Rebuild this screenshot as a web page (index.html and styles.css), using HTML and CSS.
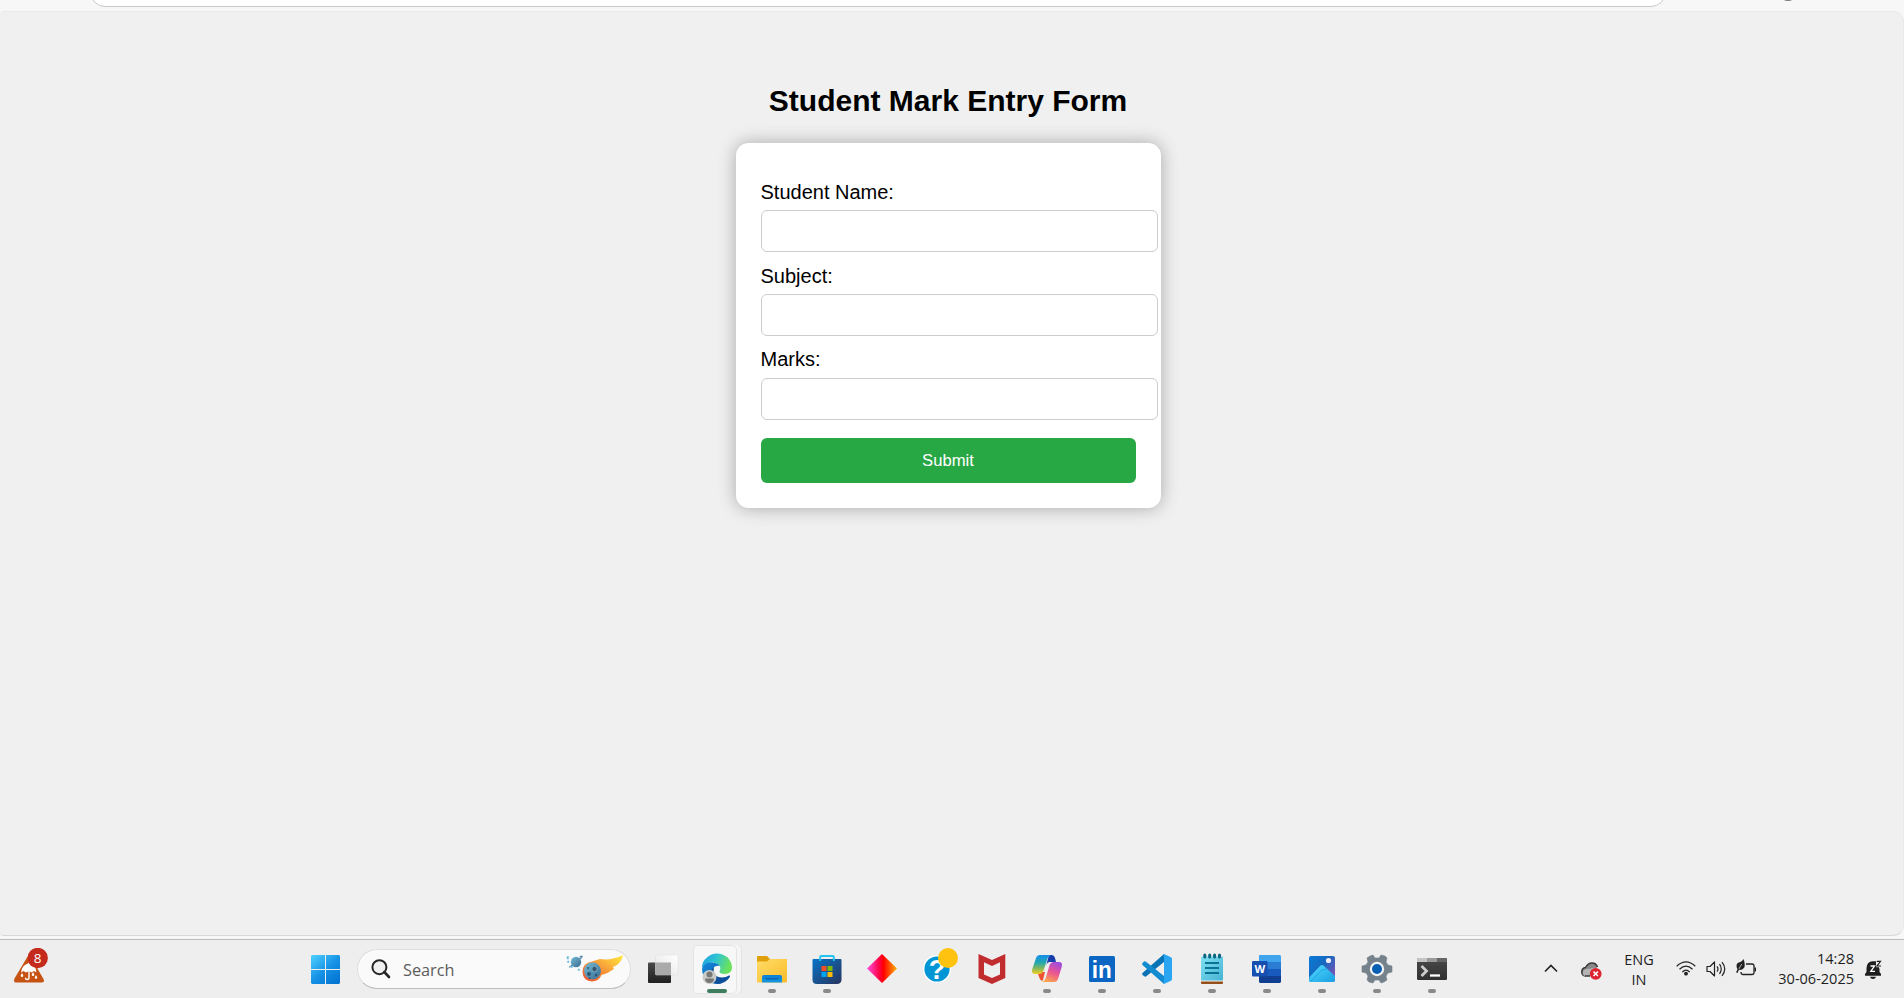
FILE: index.html
```html
<!DOCTYPE html>
<html lang="en">
<head>
<meta charset="utf-8">
<title>Student Mark Entry Form</title>
<link rel="stylesheet" href="styles.css">
</head>
<body>
<header class="browser-bar">
  <div class="address"><span class="address-chip"></span></div>
  <span class="toolbar-dot"></span>
</header>
<main class="viewport">
  <h1 class="title">Student Mark Entry Form</h1>
  <form class="card">
    <label class="label" for="name">Student Name:</label>
    <input class="field" id="name" type="text">
    <label class="label" for="subject">Subject:</label>
    <input class="field" id="subject" type="text">
    <label class="label label-marks" for="marks">Marks:</label>
    <input class="field" id="marks" type="text">
    <button class="submit" type="button">Submit</button>
  </form>
</main>
<footer class="taskbar">
  <div class="widget">
    <svg width="36" height="38" viewBox="0 0 36 38">
      <path d="M15 9.5 2.500 30.5Q1 34.5 4 34.5H29.500Q33 34.500 31.500 31L19 9.500Q17 7 15 9.500Z" fill="#c65314"/>
      <path d="M9 24.500Q10 17 16 15.500L16.500 14 17 15.500Q24 17 24.500 24.500L22 23 19.500 24.500 17 23 14 24.500 11.500 23Z" fill="#fff"/>
      <path d="M17 23v6.500q0 2-1.800 2t-1.700-1.800" fill="none" stroke="#fff" stroke-width="1.400"/>
      <path d="M10 25l1.300 2.500q0 1.500-1.300 1.500t-1.300-1.500ZM21 24l1.300 2.500q0 1.500-1.300 1.500t-1.300-1.500ZM24 27l1.300 2.500q0 1.300-1.300 1.300t-1.300-1.300Z" fill="#fff"/>
      <circle cx="25.700" cy="10" r="10.200" fill="#c42b1c"/>
      <text x="25.700" y="14.800" class="badge-text">8</text>
    </svg>
  </div>
  <svg class="start" width="29" height="29" viewBox="0 0 29 29">
    <defs><linearGradient id="win" gradientUnits="userSpaceOnUse" x1="0" y1="0" x2="25" y2="29"><stop stop-color="#4fd2ff"/><stop offset=".55" stop-color="#1591e5"/><stop offset="1" stop-color="#0474d2"/></linearGradient></defs>
    <path d="M1 0H14V14H0V1ZM15 0H28L29 1V14H15ZM0 15H14V29H1L0 28ZM15 15H29V28L28 29H15Z" fill="url(#win)"/>
  </svg>
  <div class="search">
    <svg class="magnifier" width="20" height="20" viewBox="0 0 20 20"><circle cx="8.400" cy="8.200" r="7" fill="#f0f0f0" stroke="#262626" stroke-width="2"/><path d="m13.300 13 4.700 5" stroke="#262626" stroke-width="2.600" stroke-linecap="round"/></svg>
    <span class="search-text">Search</span>
    <svg class="comet" width="58" height="28" viewBox="0 0 58 28">
      <defs><linearGradient id="fire" x1="0" x2="1" y1="1" y2="0"><stop stop-color="#ee512f"/><stop offset=".45" stop-color="#f79339"/><stop offset="1" stop-color="#ffec3c"/></linearGradient>
      <linearGradient id="planet" x2="1" y2="1"><stop stop-color="#75bed8"/><stop offset="1" stop-color="#376a91"/></linearGradient></defs>
      <circle cx="11" cy="7" r="5.200" fill="url(#planet)"/>
      <path d="M6 11Q3 13 6 11L16 3Q19 0 14.500 2" fill="none" stroke="#5e91ad" stroke-width="1.300"/>
      <path d="M2 1.500h1.500V4H2zM2.500 6h1.500v1.500H2.500zM6 11h1.500v1.500H6zM13 14h1.500v1.500H13z" fill="#72bddb" stroke="#72bddb" stroke-width=".5"/>
      <path d="M17.500 17Q17.500 8 27 6.500L35 4Q43 5 48 3.500Q53 3 58 0Q57 6 52 10L48 12 49 14Q44 18 36.500 20Q34 26.500 27 26.500Q18 26 17.500 17Z" fill="url(#fire)"/>
      <circle cx="27.500" cy="16" r="8.400" fill="url(#planet)"/>
      <circle cx="29.500" cy="14" r="2.700" fill="#33536f" stroke="#79aac0"/><circle cx="24" cy="19" r="2" fill="#33536f"/><circle cx="24.500" cy="23" r="1" fill="#33536f"/><circle cx="31" cy="20" r="1.200" fill="#33536f"/><circle cx="23" cy="13" r="1" fill="#33536f"/>
    </svg>
  </div>
  <nav class="apps">
    <div class="app app-taskview">
      <svg class="icon" viewBox="0 0 30 30"><defs><linearGradient id="tv" x2="0" y2="1"><stop stop-color="#494949"/><stop offset="1" stop-color="#202020"/></linearGradient><linearGradient id="tw" x1="1" x2="0" y2="1"><stop stop-color="#fff"/><stop offset="1" stop-color="#e3e3e3"/></linearGradient></defs>
      <rect y="8.500" width="23" height="20.500" rx="1" fill="url(#tv)"/><rect x="7.500" y="1" width="22.500" height="20" rx="1" fill="url(#tw)" stroke="#ddd" stroke-width=".5"/><path d="M7.500 8.500H23V21H8.500l-1-1z" fill="#aaa"/></svg>
    </div>
    <div class="app app-active">
      <svg class="icon" viewBox="0 0 30 30"><defs><linearGradient id="e1" x2="1" y2=".3"><stop stop-color="#1b9de2"/><stop offset=".5" stop-color="#30c5d3"/><stop offset="1" stop-color="#6be25b"/></linearGradient><linearGradient id="e2" x2="1" y2="1"><stop stop-color="#168bdc"/><stop offset="1" stop-color="#0857ad"/></linearGradient></defs>
      <path d="M0 14Q0 7 5 3.500A15 15 0 0 1 30 13Q30 20 23 20Q17 20 17.500 17Q19 15 18 12Q13 7 7 9Q2 10 0 14Z" fill="url(#e1)"/>
      <path d="M0 15Q1 9 8 8.500Q15 8 18 12Q12 11 10.500 16Q9 25 20 29A15 15 0 0 1 0 15Z" fill="url(#e2)"/>
      <path d="M12 13Q10 23 20 23.500Q24 23.500 27 21.500Q29 21 27.500 23.500A15 15 0 0 1 15 30Q8 28 9 18Q10 14 12 13Z" fill="#0d4f9b"/>
      <circle cx="7.500" cy="23" r="7" fill="#c9c9c7"/><circle cx="7.500" cy="20.500" r="3" fill="#777"/><path d="M3 25.500Q3 24.500 4 24.500H11Q12 24.500 12 25.500Q11 29 7.500 29T3 25.500Z" fill="#777"/></svg>
      <i class="dot dot-active"></i>
    </div>
    <div class="app">
      <svg class="icon" viewBox="0 0 30 30"><defs><linearGradient id="fo" x2="1" y2="1"><stop stop-color="#ffdc69"/><stop offset="1" stop-color="#f9bd29"/></linearGradient><linearGradient id="fb" x2="0" y2="1"><stop stop-color="#0d7dd3"/><stop offset="1" stop-color="#1599e4"/></linearGradient></defs>
      <path d="M0 3Q0 2 1 2H10L13 5H29Q30 5 30 6V12H0Z" fill="#dfa00b"/><path d="M0 8.500Q0 7.500 1 7.500H10L13 5H29Q30 5 30 6V27.500Q30 28.500 29 28.500H1Q0 28.500 0 27.500Z" fill="url(#fo)"/><path d="M5 28.500V23Q5 21 7 21H23Q25 21 25 23V28.500Z" fill="url(#fb)"/><path d="M8.500 24.800H21.500" stroke="#06569f" stroke-width="1.100"/></svg>
      <i class="dot"></i>
    </div>
    <div class="app">
      <svg class="icon" viewBox="0 0 30 30"><defs><linearGradient id="st" x2="1" y2="1"><stop stop-color="#0873c7"/><stop offset="1" stop-color="#28345e"/></linearGradient></defs>
      <path d="M.500 6Q.500 5 1.500 5H28.500Q29.500 5 29.500 6V26Q29 30 25 30H5Q.500 30 .500 26Z" fill="url(#st)"/><path d="M8.200 7V3Q8.200 2 9.200 2H20.800Q21.800 2 21.800 3V7" fill="none" stroke="#22c3f1" stroke-width="2"/><path d="M9.500 12h5v5h-5z" fill="#f25022"/><path d="M15.500 12h5v5h-5z" fill="#7fba00"/><path d="M9.500 18h5v5h-5z" fill="#00a4ef"/><path d="M15.500 18h5v5h-5z" fill="#ffb900"/></svg>
      <i class="dot"></i>
    </div>
    <div class="app">
      <svg class="icon" viewBox="0 0 30 30"><defs><linearGradient id="di"><stop stop-color="#ff4fe0"/><stop offset=".43" stop-color="#ff003c"/><stop offset=".55" stop-color="#ff0000"/><stop offset="1" stop-color="#ffb400"/></linearGradient></defs><path d="M15 0 30 14.500 15 29 0 14.500Z" fill="url(#di)"/></svg>
    </div>
    <div class="app">
      <svg class="icon" viewBox="0 0 30 30"><circle cx="15" cy="15" r="13.300" fill="#0096d6" stroke="#fff" stroke-width="1.400"/><text x="15" y="25" class="help-text">?</text><circle cx="26" cy="4" r="10" fill="#ffc20e"/></svg>
    </div>
    <div class="app">
      <svg class="icon" viewBox="0 0 30 30"><path fill-rule="evenodd" d="M1.500 0 15 6 28.300 0V24L15 30 1.500 24ZM7 8.200V20.500L15 24 23 20.500V8.200L15 12Z" fill="#c12c2f"/></svg>
    </div>
    <div class="app">
      <svg class="icon" viewBox="0 0 30 30"><defs><linearGradient id="c1" x2="0" y2="1"><stop stop-color="#168fea"/><stop offset=".4" stop-color="#21a8b0"/><stop offset=".7" stop-color="#83b75a"/><stop offset="1" stop-color="#f3cf25"/></linearGradient><linearGradient id="c2" x1=".7" x2=".3" y2="1"><stop stop-color="#a04be0"/><stop offset=".5" stop-color="#eb5591"/><stop offset="1" stop-color="#fba64d"/></linearGradient></defs>
      <path d="M17 1H19.500Q22 1 23 4L24 8H18Q15 8 14 12Z" fill="#173dac"/><path d="M7 18H13L11 26Q9 28 7.500 24L6 20Z" fill="#ef5133"/>
      <path d="M8 1H19Q16 2 15 6L12 15Q11 20 7 20H3Q-1 20 .300 15L4 4Q5 1 8 1Z" fill="url(#c1)"/>
      <path d="M22 28H10Q13 27 14 23L17 13Q18 8 22 8H27Q31 8 29.700 13L26 25Q25 28 22 28Z" fill="url(#c2)"/></svg>
      <i class="dot"></i>
    </div>
    <div class="app">
      <svg class="icon" viewBox="0 0 30 30"><rect x="2" y="2" width="26" height="26" rx="1.500" fill="#0a66c2"/><text x="4.800" y="24" textLength="20" lengthAdjust="spacingAndGlyphs" class="in-text">in</text></svg>
      <i class="dot"></i>
    </div>
    <div class="app">
      <svg class="icon" viewBox="0 0 30 30"><path d="M.500 19 22 0V8L4 22.500Q3 23 2 22L.500 21Q-.200 20 .500 19Z" fill="#0873b5"/><path d="M.500 11Q-.200 10 .500 9L2 7.500Q3 7 4 7.700L22 22V30L.500 11Z" fill="#138bd1"/><path d="M22 0 28.500 3Q30 3.500 30 5V25Q30 26.500 28.500 27L22 30Q20.500 29 22 27V3Q21 1 22 0Z" fill="#29a5f2"/></svg>
      <i class="dot"></i>
    </div>
    <div class="app">
      <svg class="icon" viewBox="0 0 30 30"><defs><linearGradient id="no" x2="1" y2="1"><stop stop-color="#82e1f2"/><stop offset="1" stop-color="#44b2d4"/></linearGradient></defs><rect x="4" y="25" width="22" height="5" rx="1" fill="#954f18"/><path d="M4 25h22v2.500H4z" fill="#f5f5f5"/><rect x="4" y="2.500" width="22" height="24" rx="1" fill="url(#no)"/><path d="M8 9h14M8 14h14M8 19h14" stroke="#087395" stroke-width="1.800"/><path d="M7.800 1v2M12.700 1v2M17.600 1v2M22.500 1v2" stroke="#096680" stroke-width="3" stroke-linecap="round"/></svg>
      <i class="dot"></i>
    </div>
    <div class="app">
      <svg class="icon" viewBox="0 0 30 30"><path d="M7 1H28L29 2V8H7Z" fill="#41a5ee"/><path d="M7 8h22v7H7z" fill="#2b7cd3"/><path d="M7 15h22v7H7z" fill="#185abd"/><path d="M7 22H29V28L28 29H8L7 28Z" fill="#103f91"/><rect y="7" width="15.500" height="15.500" rx="1" fill="#174fb1"/><text x="7.700" y="18.800" class="word-text">W</text></svg>
      <i class="dot"></i>
    </div>
    <div class="app">
      <svg class="icon" viewBox="0 0 30 30"><defs><linearGradient id="ph" x2="1" y2=".8"><stop stop-color="#087bd7"/><stop offset=".5" stop-color="#1768bf"/><stop offset="1" stop-color="#8851b3"/></linearGradient><linearGradient id="pm" x2="1" y2="1"><stop stop-color="#53dcff"/><stop offset="1" stop-color="#189de1"/></linearGradient></defs><rect x="2" y="2" width="26" height="26" rx="2" fill="url(#ph)"/><path d="M2.500 23 13 12Q15 10 17 12L28 22V26Q28 28 26 28H4Q2 28 2 26Z" fill="url(#pm)"/><path d="M4 27 15 16 20 15" fill="none" stroke="#1ba9e5" stroke-width="1"/><circle cx="21.500" cy="6.500" r="2.600" fill="#f1edf6"/></svg>
      <i class="dot"></i>
    </div>
    <div class="app">
      <svg class="icon" viewBox="0 0 30 30"><path d="M8 2 11 1 13 4H17L19 1 23 2 25 4 24 8 26 11 30 12V18L26 19 24 22 25 26 22 28 19 29 17 26H13L11 29 7 28 5 26 6 22 4 19 0 18V12L4 11 6 8 5 4Z" fill="#75818b" stroke="#75818b" stroke-width=".6" stroke-linejoin="round"/><circle cx="15" cy="15" r="7.200" fill="#f4f4f4"/><circle cx="15" cy="15" r="5" fill="#0860b5"/></svg>
      <i class="dot"></i>
    </div>
    <div class="app">
      <svg class="icon" viewBox="0 0 30 30"><defs><linearGradient id="te" x2="0" y2="1"><stop stop-color="#4a4a4a"/><stop offset="1" stop-color="#303030"/></linearGradient></defs><rect y="4" width="30" height="22" rx="1.200" fill="url(#te)"/><path d="M0 8V5Q0 4 1 4H10V8Z" fill="#c4c4c4"/><path d="M10 4h10v4H10z" fill="#999"/><path d="M20 4h9q1 0 1 1v3H20z" fill="#666"/><path d="m4.500 12 5 5-5 5" fill="none" stroke="#ccc" stroke-width="2.800"/><path d="M13 21.500H23" stroke="#fff" stroke-width="2.300"/></svg>
      <i class="dot"></i>
    </div>
  </nav>
  <div class="tray">
    <svg class="chevron" width="14" height="9" viewBox="0 0 14 9"><path d="m1 7.500 6-6 6 6" fill="none" stroke="#222" stroke-width="1.600"/></svg>
    <svg class="cloud" width="21" height="18" viewBox="0 0 21 18"><path d="M4.500 14Q.700 13.500.800 9.500Q1 6 4.500 5.500Q7 1 11 1Q15 1 16.500 5" fill="#888" stroke="#383838" stroke-width="1.500"/><path d="M2 10Q4 6 9 7Q12 5 15 6L10 14H4Q1 13 2 10Z" fill="#b4b4b4"/><path d="M4 14h5" stroke="#383838" stroke-width="1.500"/><circle cx="14.700" cy="11.800" r="5.900" fill="#de252f"/><path d="m12.500 9.600 4.400 4.400m0-4.400-4.400 4.400" stroke="#fff" stroke-width="1.500"/></svg>
    <div class="language"><span>ENG</span><span>IN</span></div>
    <svg class="wifi" width="20" height="15" viewBox="0 0 20 15"><g fill="none" stroke="#222" stroke-width="1.200"><path d="M.700 5.300Q10-3.500 19.300 5.300"/><path d="M3.500 8.300Q10 2 16.500 8.300"/><path d="M6.300 11.200Q10 7 13.700 11.200"/></g><circle cx="10" cy="12.700" r="1.900" fill="#222"/></svg>
    <svg class="speaker" width="20" height="16" viewBox="0 0 20 16"><g fill="none" stroke="#222" stroke-width="1.200" stroke-linejoin="round"><path d="M1 5.500H4L8.500 1V15L4 10.500H1Z"/><path d="M11 5.300Q13 8 11 10.700M13.500 3.200Q17 8 13.500 12.800M16 1.200Q21.500 8 16 14.800"/></g></svg>
    <svg class="battery" width="21" height="18" viewBox="0 0 21 18"><path d="M10 5H16Q18 5 18 7V13.500Q18 15.500 16 15.500H7Q5 15.500 5 13" fill="none" stroke="#222" stroke-width="1.300"/><path d="M18.500 8.500h1.500v4h-1.500z" fill="#222"/><path d="M7.500 0Q9.500 5 8.300 8.500Q6.500 11.500 3 10.800L1.500 14 0 13.300 1.500 10.500Q-1.500 4 4.500 3Q6.500 2 7.500 0Z" fill="#222"/><path d="m2.800 10 3-5" stroke="#ededed" stroke-width=".7"/></svg>
    <div class="clock"><span>14:28</span><span>30-06-2025</span></div>
    <svg class="bell" width="18" height="20" viewBox="0 0 18 20"><path d="M1.500 12V8Q2 1.500 7.500 1.300H12L14.500 9V12L16 14V15.700H0V14ZM5 16.800H11Q10.500 19 8 19T5 16.800Z" fill="#1e1e1e"/><path d="M11 0H18V7.200H11Z" fill="#ededed"/><path d="M5.500 6H9.500L5.800 11.300H10" fill="none" stroke="#fff" stroke-width="1.300"/><path d="M11.700 1.300H15.500L12 6H16" fill="none" stroke="#1e1e1e" stroke-width="1.200"/></svg>
  </div>
</footer>
</body>
</html>
```

FILE: styles.css
```css
* { box-sizing: border-box; }
body {
  margin: 0;
  width: 1904px;
  height: 998px;
  display: flex;
  flex-direction: column;
  overflow: hidden;
  background: #f7f7f7;
  font-family: "Liberation Sans", Arial, sans-serif;
}
.browser-bar {
  height: 11px;
  flex: none;
  display: flex;
  align-items: flex-start;
  padding-left: 90px;
  overflow: hidden;
}
.address {
  width: 1576px;
  height: 30px;
  margin-top: -23px;
  border: 1px solid #c8c8c8;
  border-radius: 16px;
  background: #fff;
  padding: 0 0 6px 8px;
  display: flex;
}
.address-chip { width: 50px; background: #f5f5f5; border-radius: 10px; }
.toolbar-dot { width: 18px; height: 18px; margin: -17px 0 0 113px; border-radius: 50%; background: #777; }
.viewport {
  height: 925px;
  flex: none;
  display: flex;
  flex-direction: column;
  align-items: center;
  padding: 72px 7px 0 0;
  background: #f0f0f0;
  border: 1px solid #e9e9e9;
  border-left: 0;
  border-bottom-color: #d9d9d9;
  border-radius: 4px 11px 11px 4px;
}
.title { margin: 0; font-size: 30px; line-height: 34px; font-weight: 700; color: #000; }
.card {
  width: 425px;
  height: 365px;
  margin-top: 25px;
  padding: 37px 25px 25px;
  display: flex;
  flex-direction: column;
  align-items: flex-start;
  background: #fff;
  border-radius: 12.5px;
  box-shadow: 0 0 18px rgba(0, 0, 0, .3);
}
.label { font-size: 20px; line-height: 24px; height: 30px; color: #000; }
.label-marks { line-height: 22px; }
.field {
  width: 397px;
  height: 42px;
  flex: none;
  margin: 0 0 12px;
  border: 1px solid #ccc;
  border-radius: 6px;
  background: #fff;
}
.submit {
  width: 375px;
  height: 45px;
  margin: 6px 0 0;
  padding: 0;
  border: 0;
  border-radius: 6px;
  background: #28a745;
  color: #fff;
  font: 16.67px "Liberation Sans", Arial, sans-serif;
}
.taskbar {
  height: 59px;
  flex: none;
  margin-top: 3px;
  border-top: 1px solid #bcbcbc;
  background: #eee;
  display: flex;
  align-items: flex-start;
  font-family: "Open Sans", "Noto Sans", sans-serif;
}
.widget { width: 311px; padding: 8px 0 0 12px; }
.widget svg { display: block; }
.badge-text { font: 13.5px "Open Sans", sans-serif; fill: #fff; text-anchor: middle; }
.start { margin-top: 15px; }
.search {
  width: 274px;
  height: 40px;
  margin: 9px 0 0 17px;
  padding: 0 7px 0 13px;
  display: flex;
  align-items: center;
  background: #fafafa;
  border: 1px solid #dedede;
  border-bottom-color: #bdbdbd;
  border-radius: 20px;
}
.search-text { margin: 1px 0 0 12px; font-size: 16.3px; color: #5c5c5c; }
.comet { margin-left: auto; }
.apps { display: flex; margin-left: 3px; }
.app {
  width: 55px;
  height: 58px;
  padding-top: 14px;
  display: flex;
  flex-direction: column;
  align-items: center;
}
.app-taskview { padding-left: 2px; }
.app-active {
  width: 44px;
  height: 49px;
  margin: 5px 7px 0 4px;
  padding: 9px 0 0 4px;
  border-radius: 5px;
  background: #f7f7f7;
  box-shadow: inset 0 0 0 1px #e4e4e4, 4px 0 0 #f5f5f5, 5px 0 0 #e2e2e2;
}
.icon { width: 30px; height: 30px; flex: none; overflow: visible; }
.dot { width: 8px; height: 4px; margin-top: 5px; border-radius: 2px; background: #898989; }
.dot-active { width: 20px; background: #3e7e5e; }
.help-text { font: bold 27px "Liberation Sans", sans-serif; fill: #fff; text-anchor: middle; }
.in-text { font: bold 24px "Liberation Sans", sans-serif; fill: #fff; }
.word-text { font: bold 11px "Open Sans", sans-serif; fill: #fff; text-anchor: middle; }
.tray { display: flex; color: #1f1f1f; font-size: 14.5px; line-height: 20px; }
.chevron { margin: 24px 0 0 85px; }
.cloud { margin: 22px 0 0 23px; }
.language { width: 32px; margin: 10px 0 0 21px; display: flex; flex-direction: column; align-items: center; }
.wifi { margin: 21px 0 0 21px; }
.speaker { margin: 21px 0 0 10px; }
.battery { margin: 19px 0 0 10px; }
.clock { width: 80px; margin: 9px 0 0 17px; display: flex; flex-direction: column; align-items: flex-end; }
.bell { margin: 20px 0 0 11px; }
```
